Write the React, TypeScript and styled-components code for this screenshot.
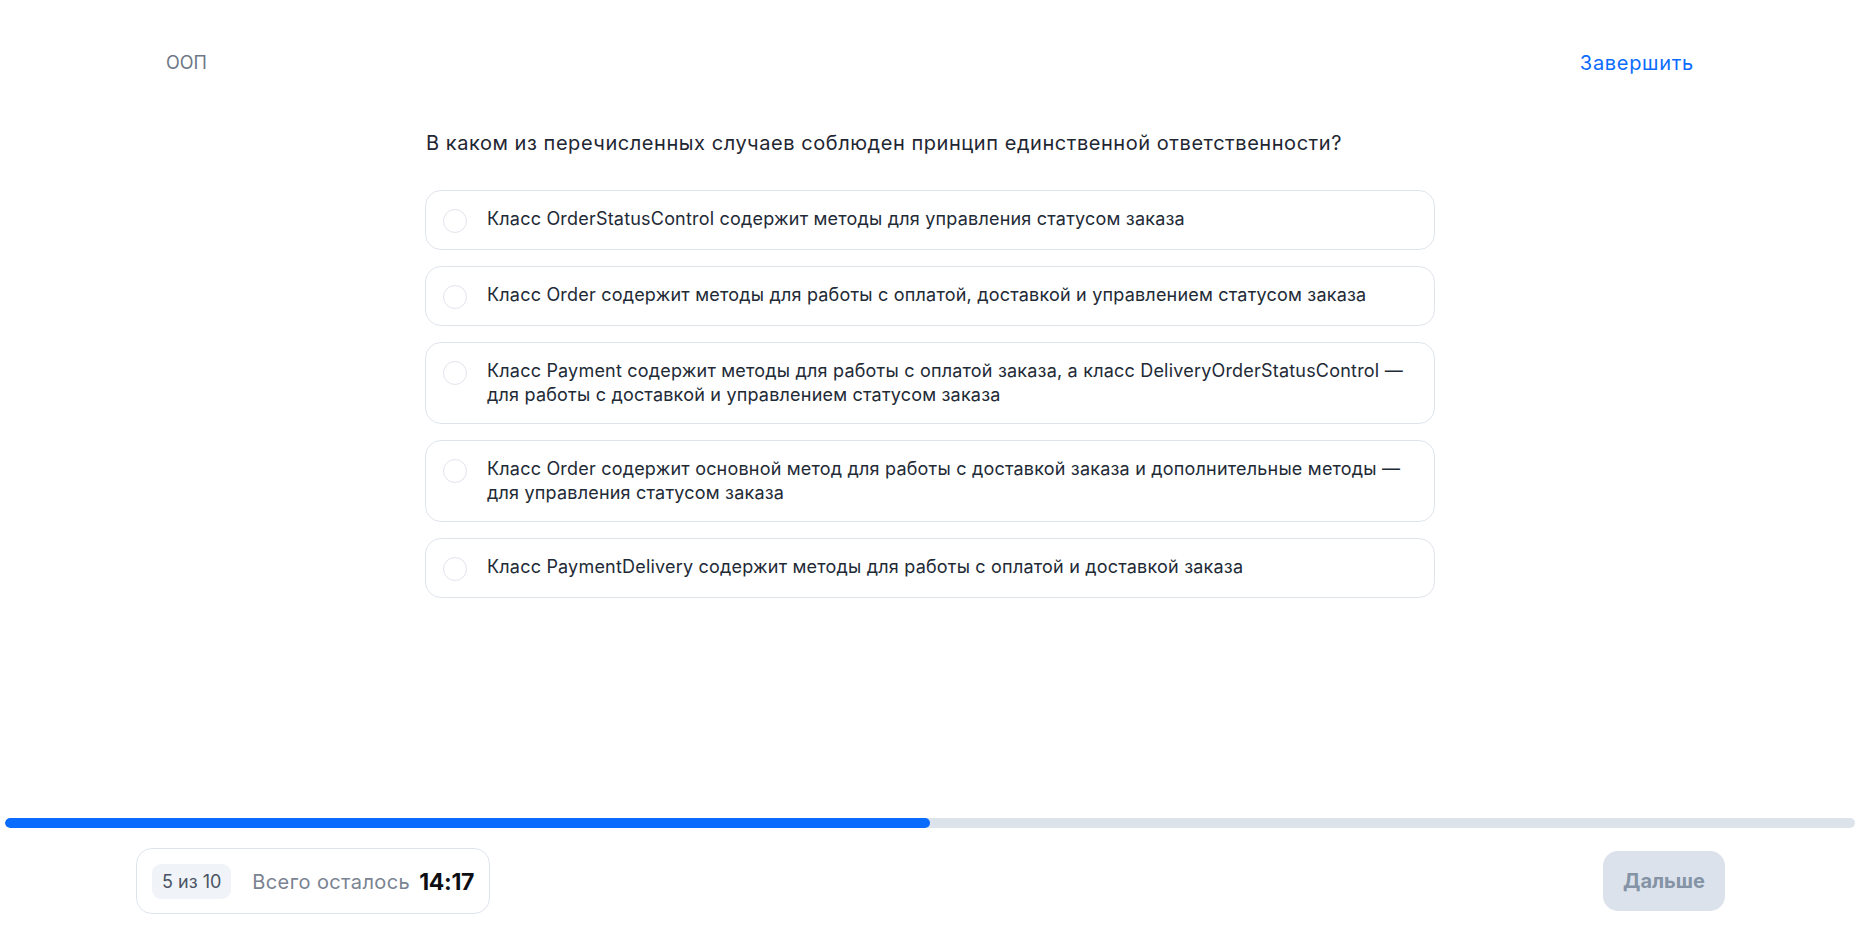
import React from "react";
import styled, { createGlobalStyle } from "styled-components";

const GlobalStyle = createGlobalStyle`
  * { box-sizing: border-box; }
  html, body { margin: 0; padding: 0; background: #ffffff; }
  body {
    font-family: Inter, "Noto Sans", "Liberation Sans", sans-serif;
    color: #1f2733;
    -webkit-font-smoothing: antialiased;
  }
`;

const Page = styled.div`
  min-height: 100vh;
  display: flex;
  flex-direction: column;
`;

const Header = styled.header`
  display: flex;
  align-items: center;
  justify-content: space-between;
  padding: 50px 166px 0 166px;
  height: 75px;
`;

const Topic = styled.div`
  font-size: 18px;
  line-height: 24px;
  color: #6e7787;
`;

const FinishLink = styled.button`
  border: none;
  background: none;
  padding: 0;
  font-family: inherit;
  font-size: 20px;
  letter-spacing: 0.7px;
  line-height: 24px;
  color: #0b6cff;
  cursor: pointer;
`;

const Main = styled.main`
  flex: 1;
  display: flex;
  justify-content: center;
`;

const Column = styled.div`
  width: 1010px;
  display: flex;
  flex-direction: column;
`;

const Question = styled.h1`
  margin: 54px 0 33px 1px;
  font-size: 20px;
  font-weight: 400;
  letter-spacing: 0.55px;
  line-height: 28px;
  color: #1f2733;
`;

const Options = styled.div`
  display: flex;
  flex-direction: column;
  gap: 16px;
`;

const Option = styled.label`
  display: flex;
  align-items: flex-start;
  gap: 20px;
  padding: 16px 17px;
  border: 1px solid #dfe4ec;
  border-radius: 16px;
  background: #ffffff;
  cursor: pointer;
`;

const Radio = styled.span`
  flex: none;
  width: 24px;
  height: 24px;
  margin-top: 2px;
  border-radius: 50%;
  border: 1.5px solid #dfe4ec;
  background: #ffffff;
`;

const OptionText = styled.span`
  font-size: 18px;
  letter-spacing: 0.2px;
  line-height: 24px;
  color: #222a36;
`;

const Track = styled.div`
  margin: 0 5px;
  height: 10px;
  border-radius: 5px;
  background: #dce3eb;
  overflow: hidden;
`;

const Fill = styled.div`
  height: 100%;
  border-radius: 5px;
  background: #0a6bff;
`;

const Footer = styled.footer`
  display: flex;
  align-items: center;
  justify-content: space-between;
  padding: 20px 135px 21px 136px;
`;

const Status = styled.div`
  display: flex;
  align-items: center;
  padding: 15px 15px 14px 15px;
  border: 1px solid #dfe4ec;
  border-radius: 16px;
`;

const Counter = styled.span`
  display: inline-flex;
  align-items: center;
  height: 35px;
  padding: 0 10px;
  border-radius: 9px;
  background: #f0f3f8;
  font-size: 18px;
  color: #4a5363;
`;

const TimeLabel = styled.span`
  margin-left: 21px;
  font-size: 20px;
  letter-spacing: 0.4px;
  color: #7a8392;
`;

const Time = styled.span`
  margin-left: 9px;
  font-size: 23px;
  font-weight: 700;
  color: #0d0f14;
  letter-spacing: -0.3px;
`;

const NextButton = styled.button`
  width: 122px;
  height: 60px;
  border: none;
  border-radius: 15px;
  background: #dbe2eb;
  font-family: inherit;
  font-size: 20px;
  font-weight: 700;
  color: #8493a5;
  cursor: default;
`;

const options = [
  "Класс OrderStatusControl содержит методы для управления статусом заказа",
  "Класс Order содержит методы для работы с оплатой, доставкой и управлением статусом заказа",
  "Класс Payment содержит методы для работы с оплатой заказа, а класс DeliveryOrderStatusControl — для работы с доставкой и управлением статусом заказа",
  "Класс Order содержит основной метод для работы с доставкой заказа и дополнительные методы — для управления статусом заказа",
  "Класс PaymentDelivery содержит методы для работы с оплатой и доставкой заказа",
];

export default function App() {
  const current = 5;
  const total = 10;
  return (
    <Page>
      <GlobalStyle />
      <Header>
        <Topic>ООП</Topic>
        <FinishLink>Завершить</FinishLink>
      </Header>
      <Main>
        <Column>
          <Question>
            В каком из перечисленных случаев соблюден принцип единственной ответственности?
          </Question>
          <Options>
            {options.map((o) => (
              <Option key={o}>
                <Radio />
                <OptionText>{o}</OptionText>
              </Option>
            ))}
          </Options>
        </Column>
      </Main>
      <Track>
        <Fill style={{ width: `${(current / total) * 100}%` }} />
      </Track>
      <Footer>
        <Status>
          <Counter>
            {current} из {total}
          </Counter>
          <TimeLabel>Всего осталось</TimeLabel>
          <Time>14:17</Time>
        </Status>
        <NextButton disabled>Дальше</NextButton>
      </Footer>
    </Page>
  );
}
